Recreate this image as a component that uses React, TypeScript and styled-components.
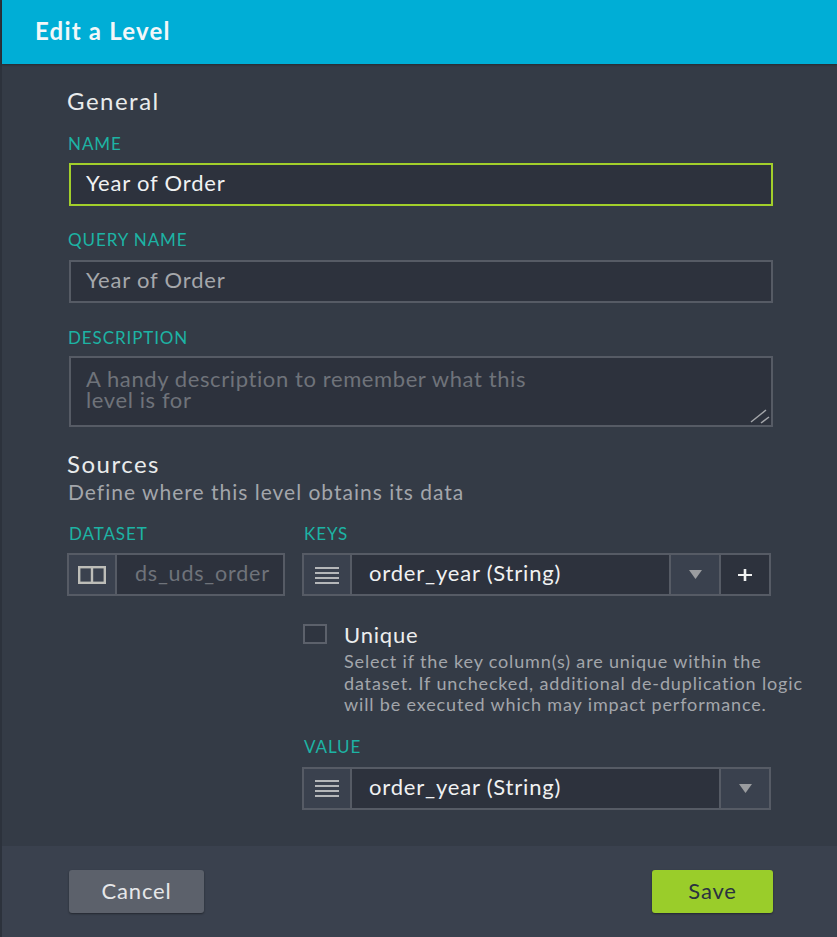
import React from "react";
import styled, { createGlobalStyle } from "styled-components";

const Global = createGlobalStyle`
  html, body { margin: 0; padding: 0; background: #343b46; }
  * { box-sizing: border-box; }
  body { font-family: Lato, "Open Sans", sans-serif; }
`;

const Modal = styled.div`
  width: 837px;
  height: 937px;
  display: flex;
  flex-direction: column;
  background: #343b46;
  border-left: 2px solid #2c323c;
`;
const Header = styled.header`
  height: 64px;
  flex: none;
  background: #00aed6;
  color: #f2f7f9;
  font-size: 24px;
  letter-spacing: 1.2px;
  font-weight: 700;
  line-height: 62px;
  padding-left: 33px;
  box-shadow: 0 1px 2px rgba(0, 0, 0, 0.3);
`;
const Body = styled.main`
  flex: 1;
  padding: 24px 0 0 65px;
`;
const SectionTitle = styled.h2<{ $mt?: number }>`
  margin: ${(p) => p.$mt ?? 0}px 0 0;
  font-size: 24px;
  letter-spacing: 1.5px;
  font-weight: 400;
  line-height: 26px;
  color: #e9ebec;
`;
const SectionHint = styled.p`
  margin: 2px 0 0;
  padding-left: 1px;
  font-size: 21px;
  letter-spacing: 1px;
  line-height: 26px;
  color: #a3a6ab;
`;
const Label = styled.label<{ $mt: number }>`
  display: block;
  margin-top: ${(p) => p.$mt}px;
  height: 20px;
  font-size: 17px;
  letter-spacing: 0.9px;
  line-height: 20px;
  color: #1db3a4;
  padding-left: 1px;
`;
const TextField = styled.div<{ $focus?: boolean; $dim?: boolean; $gap: number }>`
  width: 704px;
  height: 43px;
  margin: ${(p) => p.$gap}px 0 0 2px;
  padding-left: 15px;
  background: #2d323d;
  border: 2px solid ${(p) => (p.$focus ? "#a2cf2b" : "#565b65")};
  color: ${(p) => (p.$dim ? "#a5a7ab" : "#f0f1f2")};
  font-size: 22px;
  letter-spacing: 0.8px;
  line-height: 36px;
`;
const AreaWrap = styled.div`
  position: relative;
  width: 704px;
  height: 71px;
  margin: 8px 0 0 2px;
`;
const Area = styled.textarea`
  display: block;
  width: 100%;
  height: 100%;
  resize: none;
  padding: 10px 208px 0 15px;
  background: #2d323d;
  border: 2px solid #565b65;
  border-radius: 0;
  outline: none;
  font-family: inherit;
  font-size: 22px;
  letter-spacing: 0.6px;
  line-height: 21px;
  &::placeholder { color: #6f737a; opacity: 1; }
`;
const Grip = styled.svg`
  position: absolute;
  right: 3px;
  bottom: 3px;
`;
const Columns = styled.div`
  display: flex;
  align-items: flex-start;
  margin-top: 19px;
`;
const DatasetColumn = styled.div`
  width: 235px;
  flex: none;
`;
const KeysColumn = styled.div`
  width: 480px;
  flex: none;
`;
const ColLabel = styled.div<{ $mt?: number }>`
  margin-top: ${(p) => p.$mt ?? 0}px;
  height: 20px;
  font-size: 17px;
  letter-spacing: 0.9px;
  line-height: 20px;
  color: #1db3a4;
  padding-left: 2px;
`;
const Group = styled.div<{ $w: number; $gap?: number }>`
  display: flex;
  width: ${(p) => p.$w}px;
  height: 43px;
  margin-top: ${(p) => p.$gap ?? 9}px;
  background: #2d323d;
  border: 2px solid #565b65;
`;
const Addon = styled.div`
  width: 48px;
  flex: none;
  display: flex;
  align-items: center;
  justify-content: center;
  background: #3a414e;
  border-right: 2px solid #565b65;
`;
const GroupValue = styled.div<{ $dim?: boolean }>`
  flex: 1;
  min-width: 0;
  padding-left: ${(p) => (p.$dim ? 18 : 17)}px;
  font-size: ${(p) => (p.$dim ? "21.5px" : "22px")};
  letter-spacing: 0.8px;
  line-height: 36px;
  white-space: nowrap;
  color: ${(p) => (p.$dim ? "#6f737a" : "#f0f1f2")};
`;
const Caret = styled.div`
  width: 50px;
  flex: none;
  display: flex;
  align-items: center;
  justify-content: center;
  background: #3a414e;
  border-left: 2px solid #565b65;
`;
const PlusCell = styled.div`
  width: 50px;
  flex: none;
  display: flex;
  align-items: center;
  justify-content: center;
  border-left: 2px solid #565b65;
`;
const UniqueRow = styled.div`
  display: flex;
  margin: 27px 0 0 1px;
`;
const Check = styled.div`
  width: 24px;
  height: 20px;
  flex: none;
  background: #2f3540;
  border: 2px solid #5c616b;
  margin-top: 1px;
`;
const UniqueText = styled.div`
  margin-left: 17px;
  padding-top: 1px;
`;
const UniqueTitle = styled.div`
  font-size: 22px;
  letter-spacing: 0.8px;
  line-height: 22px;
  color: #eceded;
`;
const UniqueHelp = styled.div`
  margin-top: 5px;
  width: 470px;
  font-size: 18px;
  letter-spacing: 0.85px;
  line-height: 21.5px;
  color: #a3a6ab;
`;
const Footer = styled.footer`
  height: 91px;
  flex: none;
  display: flex;
  align-items: flex-start;
  justify-content: space-between;
  padding: 24px 64px 0 67px;
  background: #3a414e;
`;
const Button = styled.button<{ $primary?: boolean }>`
  height: 43px;
  width: ${(p) => (p.$primary ? 121 : 135)}px;
  padding: 0 0 2px;
  border: none;
  border-radius: 3px;
  font-family: inherit;
  font-size: 22px;
  letter-spacing: 0.8px;
  color: ${(p) => (p.$primary ? "#2a3240" : "#e6e7e9")};
  background: ${(p) => (p.$primary ? "#9acd2a" : "#5c616b")};
  box-shadow: 0 1px 2px rgba(0, 0, 0, 0.4);
`;

const ListIcon = () => (
  <svg width="24" height="18" viewBox="0 0 24 18">
    {[1, 6, 11, 16].map((y) => (
      <rect key={y} x="0" y={y} width="24" height="2" fill="#b5b7b9" />
    ))}
  </svg>
);
const TableIcon = () => (
  <svg width="28" height="18" viewBox="0 0 28 18" fill="none" stroke="#bdbdb8" strokeWidth="2.4">
    <rect x="1.2" y="1.2" width="25.6" height="15.6" />
    <line x1="14" y1="1" x2="14" y2="17" />
  </svg>
);
const Triangle = () => (
  <svg width="13" height="9" viewBox="0 0 13 9">
    <path d="M0 0H13L6.5 9Z" fill="#9a9c9f" />
  </svg>
);
const Plus = () => (
  <svg width="14" height="12" viewBox="0 0 14 12">
    <path d="M0 5H5.7V0H8.3V5H14V7H8.3V12H5.7V7H0Z" fill="#f1f2f2" />
  </svg>
);

export default function App() {
  return (
    <>
      <Global />
      <Modal>
        <Header>Edit a Level</Header>
        <Body>
          <SectionTitle>General</SectionTitle>
          <Label $mt={20}>NAME</Label>
          <TextField $focus $gap={9}>Year of Order</TextField>
          <Label $mt={24}>QUERY NAME</Label>
          <TextField $dim $gap={10}>Year of Order</TextField>
          <Label $mt={25}>DESCRIPTION</Label>
          <AreaWrap>
            <Area placeholder="A handy description to remember what this level is for" />
            <Grip width="20" height="16" viewBox="0 0 20 16" fill="none" stroke="#a5a7ab" strokeWidth="1.5">
              <line x1="1" y1="14" x2="16" y2="2" />
              <line x1="11" y1="15" x2="19" y2="9" />
            </Grip>
          </AreaWrap>
          <SectionTitle $mt={24}>Sources</SectionTitle>
          <SectionHint>Define where this level obtains its data</SectionHint>
          <Columns>
            <DatasetColumn>
              <ColLabel>DATASET</ColLabel>
              <Group $w={218}>
                <Addon><TableIcon /></Addon>
                <GroupValue $dim>ds_uds_order</GroupValue>
              </Group>
            </DatasetColumn>
            <KeysColumn>
              <ColLabel>KEYS</ColLabel>
              <Group $w={469}>
                <Addon><ListIcon /></Addon>
                <GroupValue>order_year (String)</GroupValue>
                <Caret><Triangle /></Caret>
                <PlusCell><Plus /></PlusCell>
              </Group>
              <UniqueRow>
                <Check />
                <UniqueText>
                  <UniqueTitle>Unique</UniqueTitle>
                  <UniqueHelp>
                    Select if the key column(s) are unique within the dataset. If unchecked, additional de-duplication logic will be executed which may impact performance.
                  </UniqueHelp>
                </UniqueText>
              </UniqueRow>
              <ColLabel $mt={21}>VALUE</ColLabel>
              <Group $w={469} $gap={10}>
                <Addon><ListIcon /></Addon>
                <GroupValue>order_year (String)</GroupValue>
                <Caret><Triangle /></Caret>
              </Group>
            </KeysColumn>
          </Columns>
        </Body>
        <Footer>
          <Button>Cancel</Button>
          <Button $primary>Save</Button>
        </Footer>
      </Modal>
    </>
  );
}
